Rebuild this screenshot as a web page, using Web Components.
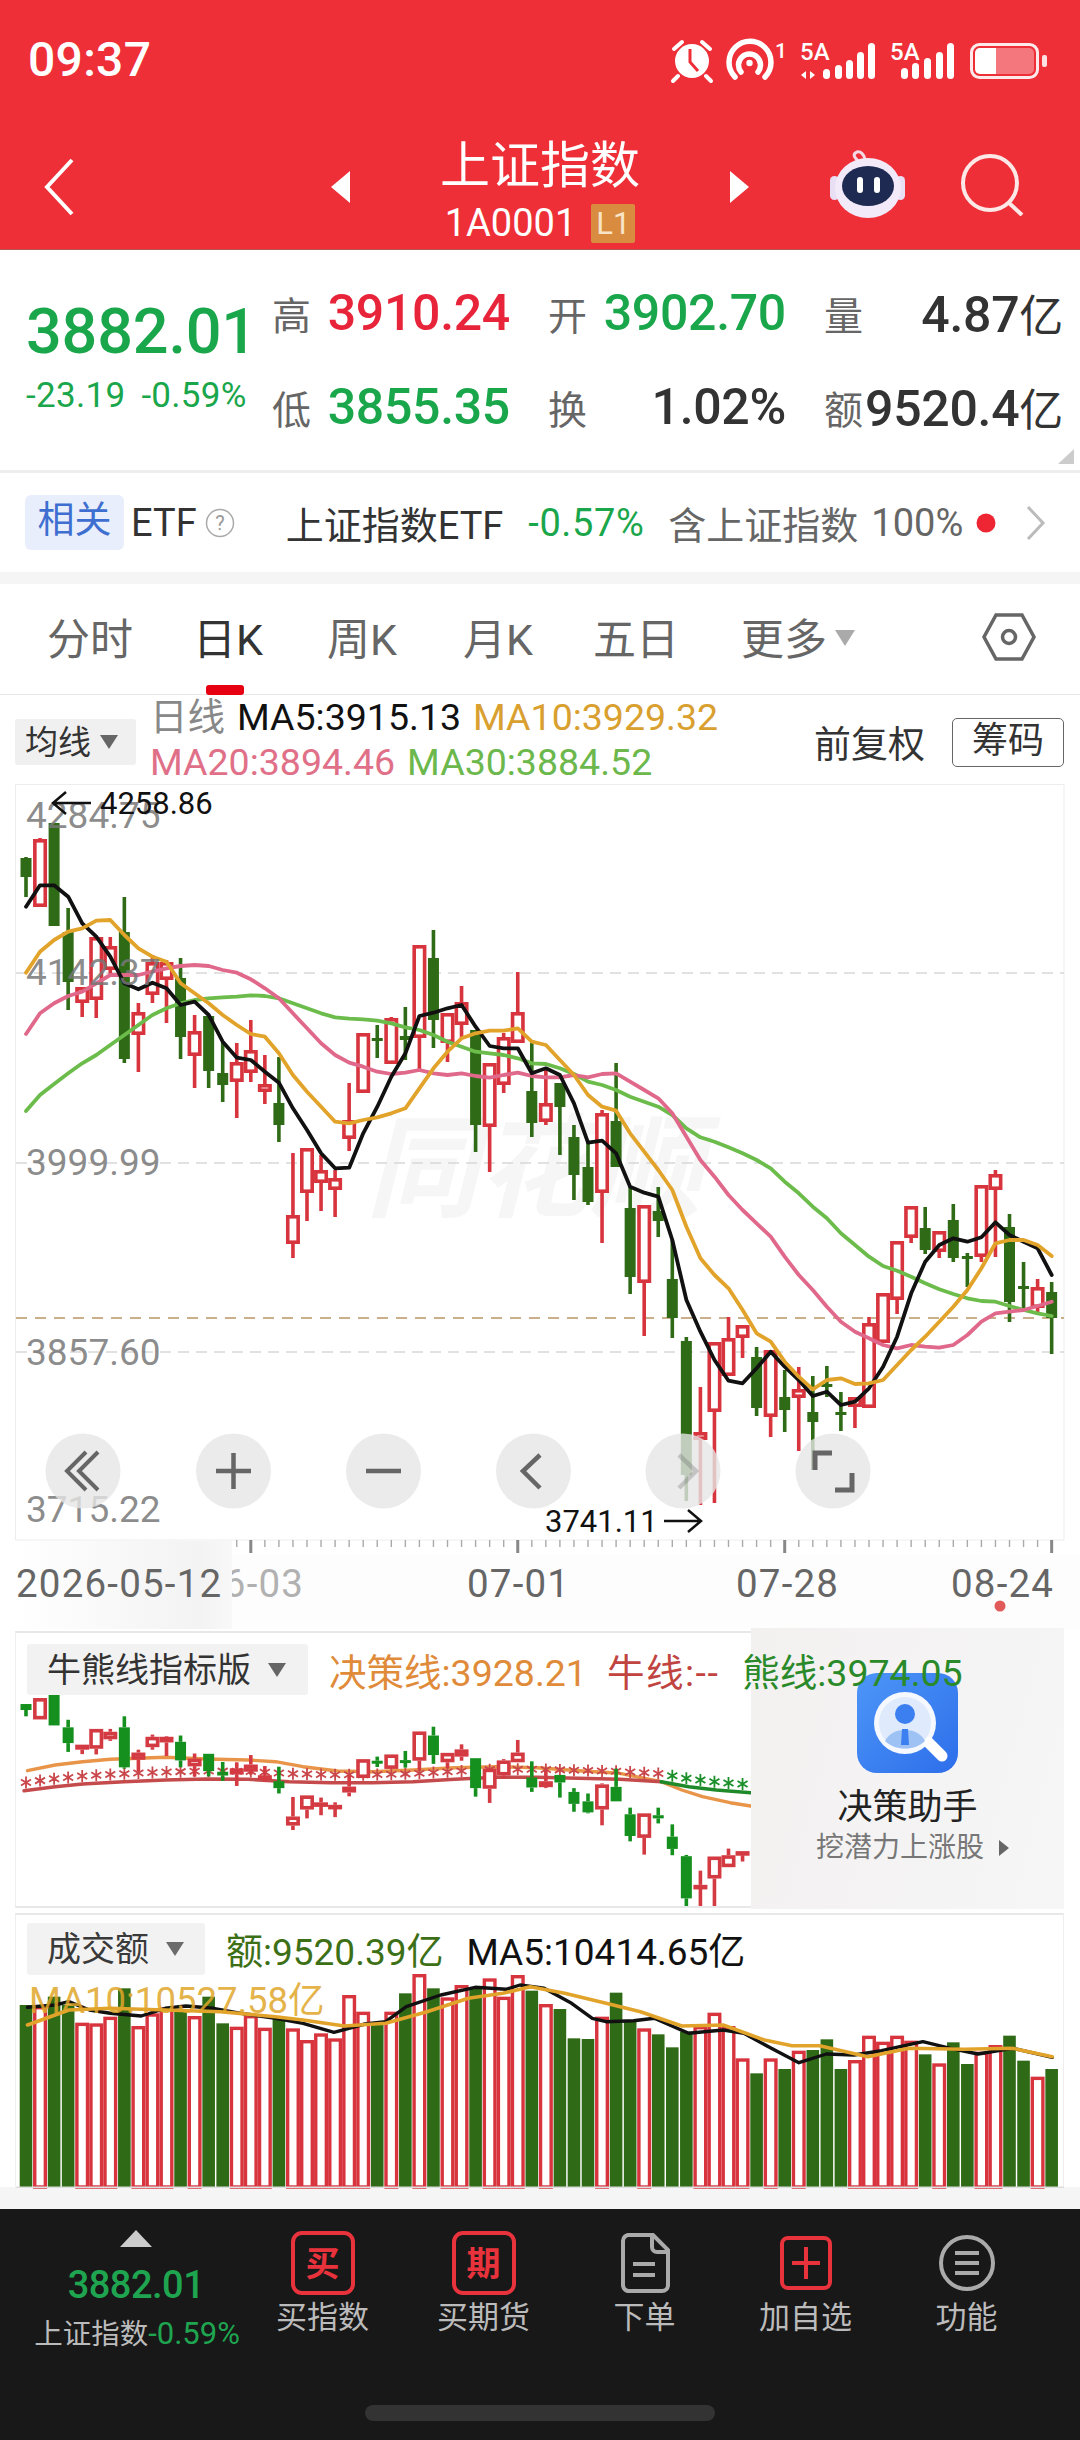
<!DOCTYPE html>
<html lang="zh">
<head>
<meta charset="utf-8">
<title>上证指数</title>
<style>
  html, body { margin: 0; padding: 0; background: #fff; }
  body { width: 1080px; height: 2440px; overflow: hidden; font-family: Roboto, "Noto Sans CJK SC", sans-serif; color: #333; }
</style>
</head>
<body>
<quote-header></quote-header>
<quote-stats></quote-stats>
<etf-row></etf-row>
<period-tabs></period-tabs>
<ma-legend></ma-legend>
<kline-chart></kline-chart>
<bull-panel></bull-panel>
<volume-panel></volume-panel>
<bottom-bar></bottom-bar>

<script>
const FONT = 'Roboto, "Noto Sans CJK SC", sans-serif';
const GREEN = "#2f6b16";
const RED = "#d8343e";
const xAt = (i) => 26 + 14.05 * i;

// [red?, wick top, body top, body bottom, wick bottom] in page y
const candles = [
  [0,857,858,877,897],[1,838,839,907,907],[0,823,823,926,926],[0,908,932,982,1010],[1,987,987,1003,1017],
  [1,937,937,1000,1018],[1,937,946,970,975],[0,897,932,1059,1063],[1,1003,1012,1035,1072],[1,955,962,995,1003],
  [1,960,962,980,1023],[0,958,978,1037,1059],[1,1015,1031,1056,1088],[0,1015,1016,1071,1088],[0,1042,1073,1085,1102],
  [1,1043,1062,1082,1118],[1,1020,1050,1073,1082],[1,1055,1084,1092,1104],[0,1057,1103,1125,1142],[1,1153,1215,1244,1258],
  [1,1148,1148,1193,1221],[1,1155,1170,1183,1211],[1,1170,1178,1190,1217],[1,1083,1120,1139,1151],[1,1033,1033,1093,1093],
  [0,1025,1038,1040,1058],[1,1017,1018,1064,1064],[0,1007,1036,1040,1060],[1,945,945,1038,1070],[0,930,958,1020,1048],
  [1,1013,1013,1043,1062],[1,986,1002,1025,1038],[0,1030,1030,1125,1152],[1,1063,1063,1127,1172],[1,1033,1037,1085,1093],
  [1,972,1012,1043,1043],[0,1040,1091,1123,1137],[1,1068,1103,1122,1125],[0,1083,1083,1107,1155],[0,1125,1137,1175,1200],
  [0,1142,1167,1202,1205],[1,1110,1113,1193,1243],[0,1063,1121,1167,1167],[0,1187,1208,1277,1294],[1,1205,1205,1283,1336],
  [0,1187,1211,1221,1237],[0,1240,1279,1318,1338],[0,1337,1341,1475,1501],[1,1387,1432,1440,1505],[1,1342,1342,1412,1503],
  [1,1317,1338,1376,1376],[1,1325,1325,1338,1358],[0,1347,1357,1408,1416],[1,1350,1350,1417,1437],[0,1370,1397,1410,1432],
  [1,1367,1389,1398,1451],[0,1376,1412,1422,1470],[0,1366,1384,1386,1397],[0,1392,1412,1415,1431],[1,1397,1397,1407,1428],
  [1,1317,1323,1408,1408],[1,1293,1293,1343,1343],[1,1241,1241,1300,1314],[1,1206,1206,1238,1243],[0,1207,1228,1250,1254],
  [1,1231,1231,1252,1258],[0,1204,1220,1258,1262],[0,1253,1256,1258,1287],[1,1185,1185,1257,1262],[1,1170,1174,1190,1257],
  [0,1214,1227,1302,1322],[0,1262,1286,1289,1308],[1,1279,1287,1308,1312],[0,1282,1292,1318,1354]
];

// moving averages, read off the chart: first 37 points from y=780, the rest from y=1000 (both in thirds of a px)
const maRaw = {
  "#6cbc4c": [993,945,912,880,850,825,795,765,735,705,685,670,660,655,652,650,646,648,655,670,685,700,712,716,718,722,730,742,750,765,785,800,815,820,825,835,850,
    192,205,222,245,255,270,290,305,320,345,385,412,425,442,460,480,505,545,580,620,655,700,735,770,798,812,830,850,868,882,895,903,905,918,930,940,948],
  "#e0688a": [762,700,670,648,635,610,585,585,585,575,565,558,555,558,570,578,598,625,655,700,745,790,825,848,860,875,882,878,870,880,885,880,888,893,885,878,888,
    232,232,225,232,222,220,245,270,295,340,410,480,530,585,630,670,710,770,825,870,920,965,995,1015,1035,1045,1035,1040,1043,1035,1005,965,940,935,930,918,905],
  "#111": [380,316,316,350,430,470,530,610,628,608,625,675,665,705,785,833,840,875,908,985,1050,1120,1165,1163,1060,980,890,820,708,698,685,675,740,798,805,805,880,
    205,225,310,428,422,460,560,578,590,720,900,995,1080,1142,1150,1105,1055,1100,1140,1188,1175,1215,1205,1165,1100,1010,880,785,735,715,725,712,667,705,725,745,825],
  "#e2a32a": [578,515,480,455,445,422,420,465,505,530,545,610,640,670,705,735,762,770,820,885,935,980,1025,1030,1020,1012,1000,985,925,865,815,775,760,752,752,745,785,
    135,180,225,285,320,332,400,455,510,570,680,775,825,865,930,1000,1025,1085,1130,1168,1140,1135,1152,1150,1140,1095,1050,1010,965,920,870,805,730,720,720,735,768]
};

const volTops = [315,318,290,315,368,370,350,265,378,340,322,330,348,290,370,380,345,383,352,385,420,400,415,285,335,370,335,280,222,265,292,255,262,235,290,225,272,312,327,415,417,350,278,365,385,403,442,395,378,338,378,475,520,475,507,452,450,418,507,480,407,425,407,422,463,490,427,492,455,435,407,482,530,507];

function candleSvg(c, i, opt) {
  const m = opt.map || ((y) => y);
  const x = xAt(i);
  const [up, wt, bt, bb, wb] = c.slice(0, 5);
  const [a, b, d, e] = [m(wt), m(bt), m(bb), m(wb)];
  const col = up ? opt.red : opt.green;
  let s = "";
  if (b - a > 0.5) s += `<rect x="${x - 1.8}" y="${a}" width="3.6" height="${b - a}" fill="${col}"/>`;
  if (e - d > 0.5) s += `<rect x="${x - 1.8}" y="${d}" width="3.6" height="${e - d}" fill="${col}"/>`;
  if (up) {
    s += `<rect x="${x - 5.2}" y="${b + 1.8}" width="10.4" height="${Math.max(d - b - 3.6, 1)}" fill="#fff" stroke="${col}" stroke-width="3.6"/>`;
  } else {
    s += `<rect x="${x - 5.5}" y="${b}" width="11" height="${Math.max(d - b, 3)}" fill="${col}"/>`;
  }
  return s;
}

const poly = (pts, col, w) => `<polyline points="${pts.map((p) => p[0].toFixed(1) + "," + p[1].toFixed(1)).join(" ")}" fill="none" stroke="${col}" stroke-width="${w}" stroke-linejoin="round" stroke-linecap="round"/>`;

class QuoteHeader extends HTMLElement {
  constructor() {
    super();
    this.attachShadow({ mode: "open" }).innerHTML = `
    <style>
      :host { display: block; height: 250px; background: #ee2f38; color: #fff; font-family: ${FONT}; box-sizing: border-box; border-bottom: 1px solid #b8544f; }
      .status { height: 118px; display: flex; align-items: center; justify-content: space-between; padding: 0 20px 0 28px; }
      .time { font-size: 48px; font-weight: 500; letter-spacing: 0.3px; }
      .nav { display: flex; align-items: center; box-sizing: border-box; height: 131px; padding: 6px 0 0 43px; }
      .mid { width: 380px; display: flex; flex-direction: column; align-items: center; padding-top: 8px; box-sizing: border-box; }
      .title { font-size: 50px; line-height: 56px; }
      .sub { display: flex; align-items: center; gap: 15px; font-size: 38px; line-height: 40px; margin-top: 9px; }
      .badge { width: 44px; height: 39px; background: #d98c3f; color: #f8e4c8; font-size: 31px; line-height: 39px; text-align: center; border-radius: 2px; }
      svg { display: block; }
    </style>
    <div class="status">
      <span class="time">09:37</span>
      <svg width="392" height="50" viewBox="668 34 392 50">
        <circle cx="692" cy="61" r="17" fill="#fff"/>
        <path d="M690 49v13l8 9" fill="none" stroke="#ee2f38" stroke-width="3"/>
        <path d="M674 49l8-7M710 49l-8-7M678 76l-5 5M706 76l5 5" stroke="#fff" stroke-width="4" stroke-linecap="round"/>
        <path d="M735 77a21 21 0 1 1 30 0M741 72a11 11 0 1 1 17 0" fill="none" stroke="#fff" stroke-width="5.5" stroke-linecap="round"/>
        <circle cx="749.5" cy="63" r="3.2" fill="#fff"/>
        <text x="775" y="58" font-size="21" font-weight="500" fill="#fff">1</text>
        <text x="800" y="60" font-size="24" font-weight="500" fill="#fff">5A</text>
        <path d="M806 71l-5 4 5 4zM810 71l5 4-5 4z" fill="#fff"/>
        <g fill="#fff">
          <rect x="823" y="69" width="7" height="10" rx="3.5"/><rect x="835" y="65" width="7" height="14" rx="3.5"/><rect x="846" y="60" width="7" height="19" rx="3.5"/><rect x="857" y="52" width="7" height="27" rx="3.5"/><rect x="868" y="43" width="7" height="36" rx="3.5"/>
        </g>
        <text x="890" y="60" font-size="24" font-weight="500" fill="#fff">5A</text>
        <g fill="#fff">
          <rect x="901" y="68" width="7" height="11" rx="3.5"/><rect x="912" y="63" width="7" height="16" rx="3.5"/><rect x="924" y="58" width="7" height="21" rx="3.5"/><rect x="936" y="52" width="7" height="27" rx="3.5"/><rect x="947" y="43" width="7" height="36" rx="3.5"/>
        </g>
        <rect x="971.5" y="44.5" width="66" height="33" rx="8" fill="none" stroke="#fff" stroke-width="3" opacity=".9"/>
        <rect x="975" y="48" width="59" height="26" rx="5" fill="#fff" opacity=".35"/>
        <path d="M980 48h16v26h-16a5 5 0 0 1-5-5v-16a5 5 0 0 1 5-5z" fill="#fff"/>
        <rect x="1042" y="55" width="5" height="12" rx="2" fill="#fff" opacity=".85"/>
      </svg>
    </div>
    <div class="nav">
      <svg width="31" height="58" viewBox="0 0 31 58"><path d="M29 2L4 29l25 27" fill="none" stroke="#fff" stroke-width="4"/></svg>
      <svg style="margin-left:257px" width="19" height="32" viewBox="0 0 19 32"><path d="M19 0v32L0 16z" fill="#fff"/></svg>
      <div class="mid">
        <span class="title">上证指数</span>
        <div class="sub"><span>1A0001</span><span class="badge">L1</span></div>
      </div>
      <svg width="19" height="32" viewBox="0 0 19 32"><path d="M0 0v32l19-16z" fill="#fff"/></svg>
      <svg style="margin:-8px 0 0 81px" width="76" height="70" viewBox="0 0 76 70">
        <path d="M30 14c-6-4-8-8-3-10 4-1 7 3 8 7" fill="none" stroke="#f3d8e6" stroke-width="3"/>
        <rect x="0" y="28" width="9" height="24" rx="4.5" fill="#e8dff5"/><rect x="66" y="28" width="9" height="24" rx="4.5" fill="#e8dff5"/>
        <ellipse cx="38" cy="40" rx="33" ry="30" fill="#f2eaf8"/>
        <ellipse cx="38" cy="38" rx="26" ry="20" fill="#1e2a52"/>
        <rect x="27" y="29" width="6" height="16" rx="3" fill="#fff"/><rect x="44" y="29" width="6" height="16" rx="3" fill="#fff"/>
      </svg>
      <svg style="margin:-4px 0 0 55px" width="64" height="62" viewBox="0 0 64 62">
        <circle cx="29" cy="29" r="27" fill="none" stroke="#fde8e8" stroke-width="4"/>
        <path d="M48 49l13 12" stroke="#fde8e8" stroke-width="4"/>
      </svg>
    </div>`;
  }
}

class QuoteStats extends HTMLElement {
  constructor() {
    super();
    this.attachShadow({ mode: "open" }).innerHTML = `
    <style>
      :host { display: flex; box-sizing: border-box; height: 223px; border-bottom: 3px solid #eee; font-family: ${FONT}; position: relative; }
      .left { width: 272px; box-sizing: border-box; padding: 50px 0 0 26px; color: #1aa64b; }
      .big { font-size: 63px; font-weight: 500; line-height: 64px; letter-spacing: -0.2px; }
      .chg { display: flex; gap: 16px; font-size: 35px; line-height: 40px; margin-top: 12px; white-space: nowrap; letter-spacing: 0.3px; }
      .grid { display: grid; grid-template-columns: 238px 238px 239px; grid-auto-rows: 94px; column-gap: 38px; padding-top: 16px; }
      .pair { display: flex; justify-content: space-between; align-items: center; white-space: nowrap; }
      .k { font-size: 39px; color: #666; }
      .v { font-size: 50px; font-weight: 500; color: #333; letter-spacing: -0.3px; }
      .v i { font-style: normal; font-weight: 400; font-size: 44px; }
      .g { color: #1aa64b; } .r { color: #e8243a; }
      .corner { position: absolute; right: 6px; bottom: 6px; width: 0; height: 0; border-left: 16px solid transparent; border-bottom: 15px solid #ccc; }
    </style>
    <div class="left">
      <div class="big">3882.01</div>
      <div class="chg"><span>-23.19</span><span>-0.59%</span></div>
    </div>
    <div class="grid">
      <div class="pair"><span class="k">高</span><span class="v r">3910.24</span></div>
      <div class="pair"><span class="k">开</span><span class="v g">3902.70</span></div>
      <div class="pair"><span class="k">量</span><span class="v">4.87<i>亿</i></span></div>
      <div class="pair"><span class="k">低</span><span class="v g">3855.35</span></div>
      <div class="pair"><span class="k">换</span><span class="v">1.02%</span></div>
      <div class="pair"><span class="k">额</span><span class="v">9520.4<i>亿</i></span></div>
    </div>
    <div class="corner"></div>`;
  }
}

class EtfRow extends HTMLElement {
  constructor() {
    super();
    this.attachShadow({ mode: "open" }).innerHTML = `
    <style>
      :host { display: flex; align-items: center; height: 99px; padding-left: 25px; font-family: ${FONT}; font-size: 38px; color: #333; white-space: nowrap; box-sizing: border-box; }
      .chip { width: 99px; height: 55px; box-sizing: border-box; background: #e8eefb; color: #3e6fd0; border-radius: 6px; text-align: center; line-height: 52px; font-size: 37px; }
      .g { color: #1aa64b; } .m { color: #666; }
      svg { display: block; flex: none; }
    </style>
    <span class="chip">相关</span>
    <span style="margin-left:7px">ETF</span>
    <svg style="margin-left:8px" width="30" height="30" viewBox="0 0 30 30"><circle cx="15" cy="15" r="13.5" fill="none" stroke="#aaa" stroke-width="1.5"/><text x="15" y="22" text-anchor="middle" font-size="20" fill="#999" font-family="Roboto">?</text></svg>
    <span style="margin-left:51px">上证指数ETF</span>
    <span class="g" style="margin-left:25px;letter-spacing:.6px">-0.57%</span>
    <span class="m" style="margin-left:24px">含上证指数</span>
    <span class="m" style="margin-left:13px">100%</span>
    <svg style="margin-left:13px" width="20" height="20" viewBox="0 0 20 20"><circle cx="10" cy="10" r="9.5" fill="#ee2533"/></svg>
    <svg style="margin-left:30px" width="20" height="34" viewBox="0 0 20 34"><path d="M2 1l15 16L2 33" fill="none" stroke="#bbb" stroke-width="3"/></svg>`;
  }
}

class PeriodTabs extends HTMLElement {
  constructor() {
    super();
    this.attachShadow({ mode: "open" }).innerHTML = `
    <style>
      :host { display: flex; align-items: center; box-sizing: border-box; height: 123px; border-top: 12px solid #f5f5f5; border-bottom: 1px solid #e6e6e6; padding: 0 0 6px 47px; font-family: ${FONT}; font-size: 43px; color: #666; position: relative; white-space: nowrap; }
      .tab { position: relative; }
      .on { color: #333; }
      .on::after { content: ""; position: absolute; left: 13px; bottom: -28px; width: 38px; height: 10px; border-radius: 3px; background: #e60012; }
      .tri { width: 0; height: 0; border-left: 10px solid transparent; border-right: 10px solid transparent; border-top: 16px solid #aaa; margin: 4px 0 0 8px; }
      svg { margin: 2px 0 0 127px; display: block; }
    </style>
    <span class="tab">分时</span>
    <span class="tab on" style="margin-left:60px">日K</span>
    <span class="tab" style="margin-left:64px">周K</span>
    <span class="tab" style="margin-left:66px">月K</span>
    <span class="tab" style="margin-left:60px">五日</span>
    <span class="tab" style="margin-left:62px">更多</span>
    <span class="tri"></span>
    <svg width="54" height="48" viewBox="0 0 54 48"><path d="M14 2h26l12 22-12 22H14L2 24z" fill="none" stroke="#666" stroke-width="3.5"/><circle cx="27" cy="24" r="6.5" fill="none" stroke="#666" stroke-width="3.5"/></svg>`;
  }
}

class MaLegend extends HTMLElement {
  constructor() {
    super();
    this.attachShadow({ mode: "open" }).innerHTML = `
    <style>
      :host { display: flex; align-items: center; height: 89px; box-sizing: border-box; padding: 0 16px 0 15px; font-family: ${FONT}; font-size: 37.5px; white-space: nowrap; }
      .chip { display: flex; align-items: center; width: 121px; height: 46px; margin-top: 5px; background: #f0f0f0; border-radius: 3px; box-sizing: border-box; padding: 0 0 5px 10px; font-size: 33px; color: #333; }
      .tri { width: 0; height: 0; border-left: 9px solid transparent; border-right: 9px solid transparent; border-top: 14px solid #666; margin: 5px 0 0 9px; }
      .rows { margin-left: 14px; line-height: 45px; }
      .row { display: flex; gap: 12px; }
      .right { margin-left: auto; display: flex; align-items: center; gap: 27px; color: #333; font-size: 37px; margin-top: 5px; }
      .btn { width: 112px; height: 49px; box-sizing: border-box; border: 1.5px solid #666; border-radius: 5px; text-align: center; line-height: 44px; font-size: 36px; }
    </style>
    <div class="chip">均线<span class="tri"></span></div>
    <div class="rows">
      <div class="row"><span style="color:#888">日线</span><span style="color:#111">MA5:3915.13</span><span style="color:#d9a030">MA10:3929.32</span></div>
      <div class="row"><span style="color:#e07088">MA20:3894.46</span><span style="color:#6cb84c">MA30:3884.52</span></div>
    </div>
    <div class="right"><span>前复权</span><span class="btn">筹码</span></div>`;
  }
}

class KlineChart extends HTMLElement {
  constructor() {
    super();
    this.shadowDOM = this.attachShadow({ mode: "open" });
    this.render();
  }

  render() {
    const round = (cx, icon, op) => `<circle cx="${cx}" cy="1471" r="37.5" fill="#e6e6e6" fill-opacity=".8"/><g fill="none" stroke="#666" stroke-width="4.5" opacity="${op}">${icon}</g>`;
    let ticks = "";
    for (let i = 15; i < 74; i++) {
      const major = (i - 16) % 19 === 0;
      ticks += `<rect x="${xAt(i) - (major ? 1.5 : 0.7)}" y="1540" width="${major ? 3 : 1.4}" height="${major ? 13 : 7}" fill="${major ? "#888" : "#aaa"}"/>`;
    }
    const lines = Object.entries(maRaw).map(([col, ys]) => poly(ys.map((z, i) => [xAt(i), (i < 37 ? 780 : 1000) + z / 3]), col, 3.8)).join("");
    this.shadowDOM.innerHTML = `
    <style>
      :host { display: block; height: 847px; }
      svg { display: block; font-family: ${FONT}; }
      .ax { font-size: 37px; fill: #777; fill-opacity: .85; }
      .dt { font-size: 38.5px; fill: #666; letter-spacing: 1.2px; }
      .ex { font-size: 31px; fill: #111; }
      .wm { font-family: "Noto Sans CJK SC", sans-serif; font-size: 112px; font-weight: 700; fill: #f6f6f6; font-style: italic; }
    </style>
    <svg width="1080" height="847" viewBox="0 784 1080 847">
      <defs>
        <linearGradient id="fade" x1="0" x2="1" y1="0" y2="0">
          <stop offset="0" stop-color="#fff"/><stop offset=".85" stop-color="#f3f3f3"/><stop offset="1" stop-color="#f8f8f8"/>
        </linearGradient>
      </defs>
      <rect x="15.5" y="784.5" width="1048.5" height="755.5" fill="#fff" stroke="#ededed"/>
      <text class="wm" x="366" y="1208">同花顺</text>
      <g stroke="#d8d8d8" stroke-width="1.5" stroke-dasharray="11 7">
        <path d="M16 973h1048M16 1163h1048M16 1352h1048"/>
      </g>
      <path d="M16 1318h1048" stroke="#c9b08a" stroke-width="2" stroke-dasharray="11 8"/>
      ${candles.map((c, i) => candleSvg(c, i, { red: RED, green: GREEN })).join("")}
      ${lines}
      <text class="ax" x="26" y="828">4284.75</text>
      <text class="ax" x="26" y="985">4142.37</text>
      <text class="ax" x="26" y="1175">3999.99</text>
      <text class="ax" x="26" y="1365">3857.60</text>
      <text class="ax" x="26" y="1522">3715.22</text>
      <path d="M91 803H53m13-11l-13 11 13 11" fill="none" stroke="#111" stroke-width="2.5"/>
      <text class="ex" x="100" y="814">4258.86</text>
      <text class="ex" x="545" y="1532">3741.11</text>
      <path d="M664 1521h37m-13-11l13 11-13 11" fill="none" stroke="#111" stroke-width="2.5"/>
      ${round(83, '<path d="M98 1452l-19 19 19 19M86 1452l-19 19 19 19" stroke-width="4"/>', 1)}
      ${round(233.5, '<path d="M216 1471h35M233.5 1453v36"/>', 1)}
      ${round(383.5, '<path d="M366 1471h35"/>', 1)}
      ${round(533.5, '<path d="M540 1455l-17 16 17 17"/>', 1)}
      ${round(683, '<path d="M679 1455l17 16-17 17"/>', 0.3)}
      ${round(833, '<path d="M815 1470v-17h17M852 1473v17h-17" stroke-width="5"/>', 1)}
      ${ticks}
      <text class="dt" x="201" y="1597">06-03</text>
      <rect x="15" y="1541" width="217" height="88" fill="url(#fade)"/>
      <rect x="232" y="1555" width="848" height="74" fill="#fbfbfb" fill-opacity=".5"/>
      <text class="dt" x="16" y="1597">2026-05-12</text>
      <text class="dt" x="467" y="1597">07-01</text>
      <text class="dt" x="736" y="1597">07-28</text>
      <text class="dt" x="951" y="1597">08-24</text>
      <circle cx="1000" cy="1606" r="5.5" fill="#e05a5a"/>
    </svg>`;
  }
}

class BullPanel extends HTMLElement {
  constructor() {
    super();
    this.shadowDOM = this.attachShadow({ mode: "open" });
    this.render();
  }

  render() {
    const m = (y) => 1693 + (y - 823) * 0.315 - 1631;
    const z = (p) => [p[0] / 1.452, 1600 + p[1] / 3 - 1631];
    const orange = [[40,512],[80,495],[120,485],[160,478],[200,475],[240,472],[300,477],[360,480],[400,485],[440,500],[490,513],[540,515],[600,510],[660,503],[720,500],[780,503],[840,512],[900,520],[960,545],[990,570],[1020,590],[1060,608],[1090,618]].map(z);
    const redPts = [[35,572],[80,560],[120,552],[180,545],[240,540],[300,537],[360,538],[420,545],[480,548],[540,548],[600,545],[660,538],[720,532],[780,532],[840,535],[900,538],[960,545]].map(z);
    const greenPts = [[960,545],[1000,560],[1040,570],[1090,578]].map(z);
    const yOn = (x, pts) => {
      for (let i = 1; i < pts.length; i++) {
        if (x <= pts[i][0]) {
          const t = (x - pts[i - 1][0]) / (pts[i][0] - pts[i - 1][0]);
          return pts[i - 1][1] + t * (pts[i][1] - pts[i - 1][1]);
        }
      }
      return pts[pts.length - 1][1];
    };
    const all = redPts.concat(greenPts.slice(1));
    let stars = "";
    for (let i = 0; i < 52; i++) {
      const x = xAt(i);
      if (x > 749) break;
      const y = yOn(x, all) - 8;
      const col = x > 662 ? "#1b8f2a" : "#c9474b";
      stars += `<path d="M${x} ${y - 6}v12M${x - 5} ${y - 3}l10 6M${x - 5} ${y + 3}l10-6" stroke="${col}" stroke-width="1.8"/>`;
    }
    this.shadowDOM.innerHTML = `
    <style>
      :host { display: flex; height: 279px; font-family: ${FONT}; font-size: 37.5px; white-space: nowrap; }
      .main { position: relative; margin-left: 15px; width: 736px; height: 277px; box-sizing: border-box; border-top: 2px solid #e8e8e8; border-bottom: 2px solid #e8e8e8; border-left: 1px solid #eee; z-index: 2; }
      .bg { position: absolute; left: -16px; top: -2px; }
      .head { position: relative; display: flex; align-items: center; margin: 9px 0 0 11px; }
      .chip { display: flex; flex: none; align-items: center; width: 281px; height: 51px; box-sizing: border-box; padding: 0 0 5px 20px; background: #f2f2f2; border-radius: 3px; color: #333; font-size: 34px; }
      .tri { width: 0; height: 0; border-left: 9px solid transparent; border-right: 9px solid transparent; border-top: 14px solid #666; margin: 5px 0 0 17px; }
      .head span:not(.tri) { flex: none; }
      .card { width: 313px; height: 281px; margin-top: -3px; background: linear-gradient(105deg, #f3f0f0, #f6f6f6); display: flex; flex-direction: column; align-items: center; padding-top: 45px; box-sizing: border-box; }
      .card svg { display: block; margin-left: -1px; }
      .t1 { font-size: 35px; color: #222; line-height: 40px; margin-top: 15px; }
      .t2 { font-size: 28px; color: #777; line-height: 36px; margin-top: 2px; display: flex; align-items: center; gap: 15px; margin-left: 10px; }
      .t2 i { width: 0; height: 0; border-top: 8px solid transparent; border-bottom: 8px solid transparent; border-left: 10px solid #666; }
    </style>
    <div class="main">
      <svg class="bg" width="752" height="277" viewBox="0 0 752 277">
        <defs><clipPath id="cp"><rect x="16" y="0" width="735" height="275"/></clipPath></defs>
        <g clip-path="url(#cp)">
          ${poly(orange, "#e8954a", 3.4)}
          ${stars}
          ${poly(redPts, "#c44a4c", 3.6)}
          ${poly(greenPts, "#1f8a2a", 3.6)}
          ${candles.map((c, i) => candleSvg(c, i, { red: "#d33a42", green: "#15901f", map: m })).join("")}
        </g>
      </svg>
      <div class="head">
        <div class="chip">牛熊线指标版<span class="tri"></span></div>
        <span style="margin-left:21px;color:#e08b3a">决策线:3928.21</span>
        <span style="margin-left:20px;color:#c0443f;letter-spacing:1.5px">牛线:--</span>
        <span style="margin-left:23px;color:#2a8a2a">熊线:3974.05</span>
      </div>
    </div>
    <div class="card">
      <svg width="101" height="100" viewBox="0 0 101 100">
        <defs><linearGradient id="ic" x1="0" x2="1" y1="0" y2="1"><stop offset="0" stop-color="#4d96f8"/><stop offset="1" stop-color="#2d6eea"/></linearGradient></defs>
        <rect width="101" height="100" rx="20" fill="url(#ic)"/>
        <path d="M71 69l14 14" stroke="#fff" stroke-width="11" stroke-linecap="round"/>
        <circle cx="48" cy="50" r="31" fill="#fff" opacity=".95"/>
        <circle cx="48" cy="50" r="26" fill="#dfeafc"/>
        <path d="M28 68c4-8 12-11 20-11s16 3 20 11c-10 10-30 10-40 0z" fill="#9fc2f5"/>
        <circle cx="48" cy="41" r="10" fill="#3b7ff0"/>
        <path d="M45 56h6l1 16h-8z" fill="#3b7ff0"/>
      </svg>
      <span class="t1">决策助手</span>
      <span class="t2">挖潜力上涨股<i></i></span>
    </div>`;
  }
}

class VolumePanel extends HTMLElement {
  constructor() {
    super();
    this.shadowDOM = this.attachShadow({ mode: "open" });
    this.render();
  }

  render() {
    const base = 274;
    const z = (p) => [p[0] / 1.452, 1900 + p[1] / 3 - 1913];
    const black = [[40,322],[80,315],[100,305],[130,330],[160,340],[205,348],[240,325],[270,318],[310,325],[350,340],[400,355],[440,370],[485,397],[530,372],[560,365],[590,320],[640,285],[690,262],[735,268],[755,255],[790,265],[830,310],[860,355],[880,365],[920,362],[950,355],[1000,400],[1050,390],[1080,400],[1120,445],[1160,488],[1200,462],[1240,465],[1280,452],[1340,425],[1380,445],[1420,462],[1470,445],[1528,472]].map(z);
    const orange = [[40,375],[100,330],[160,325],[240,330],[320,335],[400,350],[440,360],[500,378],[560,370],[620,335],[680,295],[730,280],[770,260],[820,280],[880,310],[930,335],[990,378],[1050,375],[1110,420],[1150,437],[1190,437],[1260,470],[1320,445],[1400,448],[1470,445],[1528,470]].map(z);
    const bars = volTops.map((t, i) => {
      const x = xAt(i);
      const y = 1900 + t / 3 - 1913;
      if (candles[i][0]) return `<rect x="${x - 5.3}" y="${y + 1.7}" width="10.6" height="${base - y - 1.7}" fill="#fff" stroke="${RED}" stroke-width="3.4"/>`;
      return `<rect x="${x - 6.3}" y="${y}" width="12.6" height="${base - y}" fill="${GREEN}"/>`;
    }).join("");
    this.shadowDOM.innerHTML = `
    <style>
      :host { display: block; position: relative; box-sizing: border-box; height: 274px; margin: 3px 16px 0 15px; border-top: 2px solid #e8e8e8; border-left: 1px solid #eee; border-right: 1px solid #eee; font-family: ${FONT}; font-size: 37px; white-space: nowrap; }
      svg { position: absolute; left: -16px; top: -2px; }
      .head { position: relative; display: flex; align-items: center; margin: 7px 0 0 11px; }
      .chip { display: flex; align-items: center; width: 178px; height: 52px; box-sizing: border-box; padding: 0 0 5px 20px; background: #f2f2f2; opacity: .96; border-radius: 3px; color: #333; font-size: 34px; }
      .tri { width: 0; height: 0; border-left: 9px solid transparent; border-right: 9px solid transparent; border-top: 14px solid #666; margin: 5px 0 0 17px; }
      .ma10 { position: relative; margin: 1px 0 0 13px; color: #e0a62a; opacity: .85; line-height: 48px; font-size: 36.5px; }
    </style>
    <svg width="1080" height="276" viewBox="0 0 1080 276">
      ${bars}
      <rect x="16" y="273.5" width="1048" height="1.5" fill="#ddd"/>
      ${poly(black, "#111", 3.4)}
      ${poly(orange, "#e2a32a", 3.6)}
    </svg>
    <div class="head">
      <div class="chip">成交额<span class="tri"></span></div>
      <span style="margin-left:21px;color:#3d7016">额:9520.39亿</span>
      <span style="margin-left:23px;color:#111">MA5:10414.65亿</span>
    </div>
    <div class="ma10">MA10:10527.58亿</div>`;
  }
}

class BottomBar extends HTMLElement {
  constructor() {
    super();
    const items = [
      ['<div class="box">买</div>', "买指数"],
      ['<div class="box">期</div>', "买期货"],
      ['<svg width="50" height="60" viewBox="0 0 50 60"><path d="M10 2h23l15 15v35a6 6 0 0 1-6 6H10a6 6 0 0 1-7-6V8a6 6 0 0 1 7-6z" fill="none" stroke="#aaa" stroke-width="4"/><path d="M32 3v11a5 5 0 0 0 5 5h11" fill="none" stroke="#aaa" stroke-width="4"/><path d="M13 31h22M13 42h22" stroke="#aaa" stroke-width="4"/></svg>', "下单"],
      ['<svg width="52" height="54" viewBox="0 0 52 54"><rect x="2" y="2" width="48" height="50" rx="6" fill="none" stroke="#e8323c" stroke-width="4"/><path d="M26 11v32M12 27h28" stroke="#e8323c" stroke-width="4"/></svg>', "加自选"],
      ['<svg width="58" height="58" viewBox="0 0 58 58"><circle cx="29" cy="29" r="26" fill="none" stroke="#aaa" stroke-width="4"/><path d="M17 19h24M17 29h24M17 39h24" stroke="#aaa" stroke-width="4"/></svg>', "功能"]
    ];
    this.attachShadow({ mode: "open" }).innerHTML = `
    <style>
      :host { display: flex; flex-direction: column; align-items: center; box-sizing: border-box; height: 253px; margin-top: 0; border-top: 22px solid #f5f5f5; background: #181818; font-family: ${FONT}; color: #bbb; padding-bottom: 19px; white-space: nowrap; }
      .row { display: flex; width: 100%; }
      .last { width: 242px; flex: none; display: flex; flex-direction: column; align-items: center; padding: 21px 0 0 36px; box-sizing: border-box; }
      .up { width: 0; height: 0; border-left: 16px solid transparent; border-right: 16px solid transparent; border-bottom: 17px solid #ccc; margin-left: -6px; }
      .price { color: #1fa550; font-size: 38px; font-weight: 500; line-height: 44px; margin: 16px 0 0 -6px; letter-spacing: -0.5px; }
      .sub { font-size: 28.5px; line-height: 36px; margin-top: 9px; margin-left: -4px; }
      .sub b { color: #1fa550; font-weight: 400; font-size: 31px; }
      .item { width: 161px; flex: none; display: flex; flex-direction: column; align-items: center; padding-top: 22px; box-sizing: border-box; }
      .ic { height: 64px; display: flex; align-items: center; justify-content: center; }
      .box { width: 64px; height: 64px; box-sizing: border-box; border: 4px solid #e8323c; border-radius: 11px; color: #e8323c; font-size: 34px; font-weight: 700; text-align: center; line-height: 54px; font-family: "Noto Sans CJK SC", sans-serif; }
      .lb { font-size: 31px; line-height: 36px; margin-top: 5px; }
      .pill { width: 350px; height: 16px; background: #333; border-radius: 8px; margin-top: auto; }
    </style>
    <div class="row">
      <div class="last">
        <span class="up"></span>
        <span class="price">3882.01</span>
        <span class="sub">上证指数<b>-0.59%</b></span>
      </div>
      ${items.map((it) => `<div class="item"><div class="ic">${it[0]}</div><span class="lb">${it[1]}</span></div>`).join("")}
    </div>
    <div class="pill"></div>`;
  }
}

customElements.define("quote-header", QuoteHeader);
customElements.define("quote-stats", QuoteStats);
customElements.define("etf-row", EtfRow);
customElements.define("period-tabs", PeriodTabs);
customElements.define("ma-legend", MaLegend);
customElements.define("kline-chart", KlineChart);
customElements.define("bull-panel", BullPanel);
customElements.define("volume-panel", VolumePanel);
customElements.define("bottom-bar", BottomBar);
</script>
</body>
</html>
